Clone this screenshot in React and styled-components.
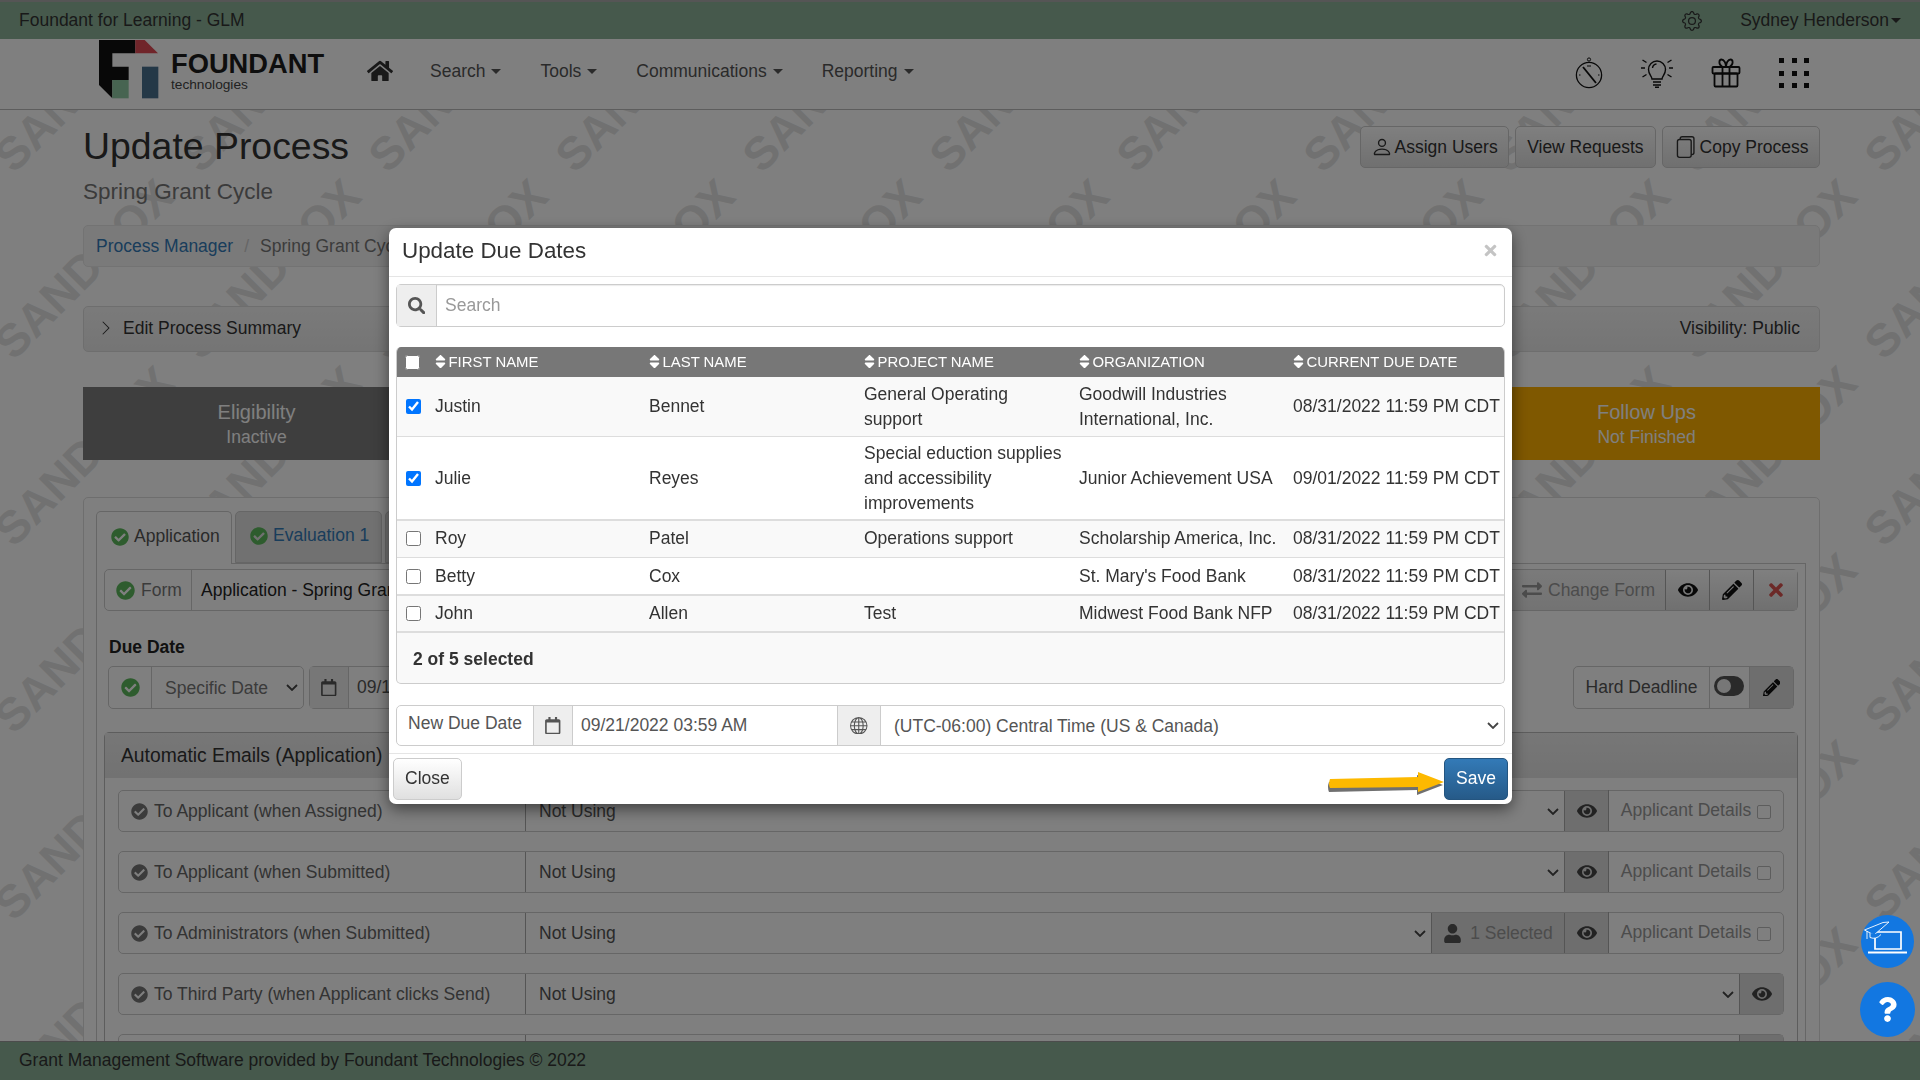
import React from "react";
import styled, { createGlobalStyle } from "styled-components";
import {
  FaHome, FaEye, FaPencilAlt, FaTimes, FaExchangeAlt, FaUser, FaCheckCircle,
  FaSort, FaSearch, FaRegCalendar, FaQuestion,
} from "react-icons/fa";
import { BsGear, BsPerson, BsFiles, BsGlobe, BsChevronRight } from "react-icons/bs";

const GlobalStyle = createGlobalStyle`
  html, body { margin: 0; padding: 0; height: 100%; overflow: hidden; }
  body { font-family: "Liberation Sans", Arial, sans-serif; font-size: 17.5px; color: #333; background: #fff; }
  * { box-sizing: border-box; }
`;

const Page = styled.div`
  height: 1080px;
  display: flex;
  flex-direction: column;
  overflow: hidden;
`;

const TopBar = styled.div`
  height: 39px;
  flex: none;
  background: #8cb298;
  border-top: 2px solid #aaa;
  display: flex;
  align-items: center;
  padding: 0 19px;
  color: #333;
`;

const TopRight = styled.div`
  margin-left: auto;
  display: flex;
  align-items: center;
  color: #333;
  svg { font-size: 20px; margin-right: 38px; }
`;

const SmallCaret = styled.span`
  display: inline-block;
  width: 0;
  height: 0;
  margin-left: ${(p) => p.$gap || 2}px;
  border-top: 5px solid currentColor;
  border-left: 5px solid transparent;
  border-right: 5px solid transparent;
`;

const NavBar = styled.nav`
  height: 71px;
  flex: none;
  background: #fff;
  border-bottom: 1px solid #bbb;
  display: flex;
  align-items: center;
  padding: 0 111px 0 99px;
`;

const Brand = styled.div`
  display: flex;
  align-items: flex-start;
  width: 268px;
  height: 60px;
  margin-top: -8px;
`;

const BrandText = styled.div`
  margin: 10px 0 0 12px;
  color: #1c1c1c;
`;

const BrandName = styled.div`
  font-size: 27.3px;
  font-weight: bold;
  line-height: 27px;
`;

const BrandSub = styled.div`
  font-size: 13.7px;
  line-height: 13px;
  color: #444;
  margin-top: 1px;
`;

const HomeLink = styled.span`
  font-size: 26px;
  line-height: 1;
  color: #333;
  margin-right: 37px;
  display: flex;
  margin-top: -6px;
`;

const NavItem = styled.span`
  display: flex;
  align-items: center;
  color: #555;
  margin-right: 39px;
  margin-top: -6px;
`;

const NavIcons = styled.div`
  margin-left: auto;
  display: flex;
  align-items: center;
  gap: 38px;
  margin-top: -2px;
`;

const Content = styled.main`
  flex: 1;
  min-height: 0;
  position: relative;
  overflow: hidden;
  padding: 16px 100px 0 83px;
`;

const WatermarkLayer = styled.div`
  position: absolute;
  top: -122px;
  left: -10px;
  display: grid;
  grid-template-columns: repeat(11, 187px);
  grid-auto-rows: 187px;
  color: #e2e2e2;
  font-size: 46px;
  font-weight: bold;
`;

const WatermarkWord = styled.span`
  display: flex;
  align-items: center;
  justify-content: center;
  white-space: nowrap;
  transform: rotate(-45deg);
`;

const Layer = styled.div`
  position: relative;
`;

const Heading = styled.div`
  display: flex;
  justify-content: space-between;
  height: 99px;
`;

const Title = styled.h1`
  margin: 0;
  font-size: 37.4px;
  font-weight: normal;
  line-height: 40px;
  color: #333;
`;

const Subtitle = styled.div`
  font-size: 22.5px;
  line-height: 26px;
  color: #777;
  margin-top: 13px;
`;

const HeadButtons = styled.div`
  display: flex;
  gap: 6px;
  height: 42px;
`;

const GradientButton = styled.button`
  font: inherit;
  color: #333;
  padding: 0 ${(p) => p.$pad || 11}px 2px;
  height: 42px;
  display: inline-flex;
  align-items: center;
  gap: ${(p) => p.$gap || 2}px;
  border: 1px solid #ccc;
  border-radius: 5px;
  background: linear-gradient(#fff, #e0e0e0);
  svg { font-size: 22px; }
`;

const HeadButton = styled(GradientButton)`
  padding-bottom: 0;
`;

const Breadcrumb = styled.div`
  height: 42px;
  display: flex;
  align-items: center;
  gap: 11px;
  padding: 0 12px;
  background: #f5f5f5;
  border: 1px solid #e6e6e6;
  border-radius: 5px;
  color: #777;
`;

const LinkText = styled.span`
  color: #337ab7;
`;

const Separator = styled.span`
  color: #ccc;
`;

const SummaryBar = styled.div`
  margin-top: 39px;
  height: 46px;
  display: flex;
  align-items: center;
  justify-content: space-between;
  padding: 0 19px 2px 14px;
  background: linear-gradient(#f5f5f5, #eaeaea);
  border: 1px solid #ddd;
  border-radius: 5px;
`;

const SummaryLabel = styled.span`
  display: flex;
  align-items: center;
  gap: 9px;
  svg { font-size: 16px; }
`;

const StageRow = styled.div`
  margin-top: 35px;
  display: flex;
  justify-content: space-between;
`;

const Stage = styled.div`
  width: 347px;
  height: 73px;
  background: ${(p) => p.$color};
  color: #fff;
  text-align: center;
  padding-top: 12px;
`;

const StageName = styled.div`
  font-size: 20px;
  line-height: 26px;
`;

const StageState = styled.div`
  line-height: 25px;
`;

const MainPanel = styled.section`
  margin-top: 37px;
  height: 700px;
  background: #fff;
  border: 1px solid #ddd;
  border-radius: 5px;
  padding: 13px 13px 0 12px;
`;

const Tabs = styled.div`
  display: flex;
  gap: 3px;
  height: 52px;
  position: relative;
  z-index: 1;
`;

const Tab = styled.div`
  width: ${(p) => p.$width}px;
  height: ${(p) => (p.$active ? 53 : 52)}px;
  display: flex;
  align-items: center;
  gap: 5px;
  padding: 0 0 3px 14px;
  background: ${(p) => (p.$active ? "#fff" : "#e2e2e2")};
  color: ${(p) => (p.$active ? "#555" : "#337ab7")};
  border: 1px solid #ccc;
  border-bottom: ${(p) => (p.$active ? "none" : "1px solid #ccc")};
  border-radius: 5px 5px 0 0;
`;

const CheckMark = styled(FaCheckCircle)`
  font-size: ${(p) => p.$size || 18}px;
  color: ${(p) => p.$color || "#5cb85c"};
  flex: none;
`;

const TabBody = styled.div`
  height: 640px;
  border: 1px solid #ccc;
  padding: 5px 7px 0;
`;

const Group = styled.div`
  display: flex;
  height: ${(p) => p.$height || 42}px;
  border: 1px solid #ccc;
  border-radius: 5px;
  background: #fff;
`;

const Addon = styled.div`
  flex: none;
  width: ${(p) => (p.$width ? `${p.$width}px` : "auto")};
  display: flex;
  align-items: center;
  justify-content: ${(p) => (p.$left ? "flex-start" : "center")};
  gap: 6px;
  padding: ${(p) => (p.$left ? "0 0 0 11px" : "0")};
  color: ${(p) => p.$color || "#777"};
  background: ${(p) => p.$bg || "transparent"};
  border-right: ${(p) => (p.$last ? "none" : "1px solid #ccc")};
  border-left: ${(p) => (p.$divided ? "1px solid #ccc" : "none")};
`;

const FormName = styled.div`
  flex: 1;
  min-width: 0;
  display: flex;
  align-items: center;
  padding-left: 9px;
  color: #222;
  border-right: 1px solid #ccc;
`;

const ChangeForm = styled.div`
  flex: none;
  width: 154px;
  display: flex;
  align-items: center;
  gap: 6px;
  padding-left: 11px;
  color: #999;
  background: linear-gradient(#f5f5f5, #e6e6e6);
  svg { font-size: 20px; }
`;

const IconButton = styled.div`
  flex: none;
  width: 44px;
  display: flex;
  align-items: center;
  justify-content: center;
  font-size: 20px;
  color: ${(p) => p.$color || "#111"};
  background: linear-gradient(#fff, #e0e0e0);
  border-left: 1px solid #aaa;
`;

const DueLabel = styled.div`
  margin-top: 24px;
  padding-left: 5px;
  font-weight: bold;
  color: #222;
  line-height: 25px;
  height: 31px;
`;

const DueRow = styled.div`
  display: flex;
  gap: 5px;
  padding: 0 4px;
`;

const chevron =
  "data:image/svg+xml,%3Csvg xmlns='http://www.w3.org/2000/svg' width='12' height='7'%3E%3Cpath d='M1 1l5 5 5-5' fill='none' stroke='%23444' stroke-width='1.8'/%3E%3C/svg%3E";

const PlainSelect = styled.select`
  font: inherit;
  appearance: none;
  flex: ${(p) => (p.$width ? "none" : "1")};
  width: ${(p) => (p.$width ? `${p.$width}px` : "auto")};
  min-width: 0;
  height: 100%;
  padding: 0 ${(p) => p.$pad || 13}px;
  border: none;
  background: #fff url("${chevron}") right 5px center no-repeat;
  color: ${(p) => p.$color || "#777"};
  border-radius: 0 5px 5px 0;
  outline: none;
`;

const Pushed = styled.div`
  margin-left: auto;
`;

const Toggle = styled.span`
  width: 30px;
  height: 20px;
  border-radius: 10px;
  background: #555;
  display: block;
  margin: -4px 2px 0 0;
  position: relative;
  &::after {
    content: "";
    position: absolute;
    left: 3px;
    top: 3px;
    width: 14px;
    height: 14px;
    border-radius: 50%;
    background: #eee;
  }
`;

const EmailPanel = styled.div`
  margin-top: 23px;
  background: #fff;
  border: 1px solid #bbb;
  border-radius: 5px;
`;

const EmailHead = styled.div`
  height: 45px;
  padding-left: 16px;
  display: flex;
  align-items: center;
  font-size: 19.3px;
  background: linear-gradient(#eee, #e4e4e4);
  color: #333;
`;

const EmailBody = styled.div`
  padding: 12px 13px 0 13px;
  display: flex;
  flex-direction: column;
  gap: 19px;
`;

const EmailLabel = styled.div`
  flex: none;
  width: 407px;
  display: flex;
  align-items: center;
  gap: 6px;
  padding-left: 12px;
  color: #666;
  border-right: 1px solid #aaa;
`;

const ExtraAddon = styled.div`
  flex: none;
  width: ${(p) => p.$width}px;
  display: flex;
  align-items: center;
  justify-content: center;
  gap: 8px;
  color: ${(p) => p.$color || "#444"};
  background: #dcdcdc;
  border-left: 1px solid #aaa;
  svg { font-size: ${(p) => p.$icon || 20}px; }
`;

const DetailsAddon = styled.label`
  flex: none;
  width: 175px;
  display: flex;
  align-items: center;
  justify-content: center;
  gap: 6px;
  color: #999;
  margin-top: -1px;
  border-left: 1px solid #aaa;
`;

const DisabledBox = styled.span`
  width: 14px;
  height: 14px;
  border: 1px solid #bbb;
  border-radius: 2px;
  margin-top: 2px;
`;

const Footer = styled.footer`
  height: 39px;
  flex: none;
  background: #8cb298;
  border-top: 1px solid #999;
  display: flex;
  align-items: center;
  padding: 0 0 1px 19px;
  color: #333;
  position: relative;
  z-index: 2;
`;

const Backdrop = styled.div`
  position: fixed;
  inset: 0;
  background: rgba(0, 0, 0, 0.5);
  z-index: 10;
`;

const Modal = styled.div`
  position: fixed;
  z-index: 11;
  left: 389px;
  top: 228px;
  width: 1123px;
  height: 576px;
  background: #fff;
  border-radius: 7px;
  box-shadow: 0 5px 15px rgba(0, 0, 0, 0.5);
  display: flex;
  flex-direction: column;
`;

const ModalHead = styled.div`
  height: 49px;
  flex: none;
  display: flex;
  align-items: center;
  justify-content: space-between;
  padding: 0 13px;
  border-bottom: 1px solid #e5e5e5;
`;

const ModalTitle = styled.h4`
  margin: 0 0 2px;
  font-size: 22.4px;
  font-weight: normal;
  color: #333;
`;

const CloseX = styled.span`
  font-size: 17px;
  display: flex;
  color: #c4c4c4;
  margin: 0 0 3px;
`;

const ModalBody = styled.div`
  flex: 1;
  padding: 7px;
  display: flex;
  flex-direction: column;
`;

const SearchGroup = styled(Group)`
  flex: none;
  box-shadow: inset 0 1px 1px rgba(0, 0, 0, 0.08);
`;

const TextInput = styled.input`
  font: inherit;
  flex: ${(p) => (p.$width ? "none" : "1")};
  width: ${(p) => (p.$width ? `${p.$width}px` : "auto")};
  min-width: 0;
  border: none;
  outline: none;
  background: transparent;
  color: #555;
  padding: 0 8px;
  &::placeholder { color: #999; }
`;

const TablePanel = styled.div`
  margin-top: 20px;
  height: 337px;
  flex: none;
  background: #f9f9f9;
  border: 1px solid #ccc;
  border-top: none;
  border-radius: 5px;
  overflow: hidden;
`;

const Table = styled.table`
  width: 100%;
  border-collapse: collapse;
  table-layout: fixed;
  background: #fff;
`;

const Th = styled.th`
  height: 30px;
  padding: 0 0 2px 1.5px;
  background: #777;
  color: #fff;
  font-size: 14.9px;
  font-weight: normal;
  text-align: left;
  text-transform: uppercase;
  white-space: nowrap;
  svg { font-size: 17px; vertical-align: -3px; margin-right: 0; }
`;

const CheckTh = styled(Th)`
  padding: 0 0 0 4px;
`;

const Td = styled.td`
  padding: 1px 4px 0 5px;
  line-height: 25px;
  color: #333;
  white-space: ${(p) => (p.$nowrap ? "nowrap" : "normal")};
`;

const Tr = styled.tr`
  height: ${(p) => p.$height}px;
  background: ${(p) => (p.$odd ? "#f9f9f9" : "#fff")};
  border-bottom: ${(p) => (p.$thick ? "2px solid #ddd" : "1px solid #ddd")};
  ${Td} { padding-top: ${(p) => (p.$tight ? 0 : 1)}px; }
`;

const Tick = styled.input`
  display: block;
  width: 15px;
  height: 15px;
  margin: 0 0 0 4px;
`;

const SelectedCount = styled.div`
  padding: 16px 0 0 16px;
  font-weight: bold;
  color: #333;
`;

const DateGroup = styled(Group)`
  margin-top: 21px;
  flex: none;
`;

const DateLabel = styled.div`
  flex: none;
  width: 137px;
  padding-top: 7px;
  text-align: center;
  color: #555;
  border-right: 1px solid #ccc;
`;

const ModalFoot = styled.div`
  flex: none;
  height: 51px;
  border-top: 1px solid #e5e5e5;
  padding: 4px 4px 0;
  display: flex;
  justify-content: space-between;
  position: relative;
`;

const SaveButton = styled(GradientButton)`
  color: #fff;
  border-color: #245580;
  background: linear-gradient(#337ab7, #265a88);
`;

const Arrow = styled.svg`
  position: absolute;
  left: 939px;
  top: 18px;
`;

const FloatStack = styled.div`
  position: fixed;
  z-index: 12;
  right: 5px;
  bottom: 43px;
  display: flex;
  flex-direction: column;
  align-items: center;
  gap: 14px;
`;

const RoundButton = styled.div`
  width: ${(p) => p.$size}px;
  height: ${(p) => p.$size}px;
  border-radius: 50%;
  background: #1277e1;
  color: #fff;
  display: flex;
  align-items: center;
  justify-content: center;
  font-size: 25px;
`;

const AppsGrid = styled.div`
  display: grid;
  grid-template-columns: repeat(3, 5px);
  gap: 7.5px;
  & > span { width: 5px; height: 5px; background: #111; }
`;

const logo = (
  <svg width="60" height="60" viewBox="0 0 180 180">
    <polygon points="0,0 109,0 109,40 40,40 40,80 89,80 89,120 40,120 40,175 0,135" fill="#111" />
    <polygon points="109,0 137,0 177,40 109,40" fill="#e04a55" />
    <rect x="40" y="120" width="49" height="55" fill="#8fc9a3" />
    <rect x="129" y="80" width="49" height="95" fill="#48708f" />
  </svg>
);

const compass = (
  <svg width="28" height="32" viewBox="0 0 28 32" fill="none" stroke="#111">
    <circle cx="14" cy="2.5" r="1.6" strokeWidth="1" />
    <circle cx="14" cy="18" r="12.6" strokeWidth="1.3" />
    <path d="M8 10 L21 26" strokeWidth="1.8" />
    <path d="M13 8v2M15 8v2M4 18h1.5M23 18h1.5" strokeWidth="1" />
  </svg>
);

const bulb = (
  <svg width="32" height="30" viewBox="0 0 32 30" fill="none" stroke="#111" strokeWidth="1.4">
    <path d="M11 21c0-3-3.5-4.5-3.5-9.5a8.5 8.5 0 0 1 17 0c0 5-3.5 6.5-3.5 9.5z" />
    <path d="M12 24h8M12 27h8M14 29.3h4M11.5 10a4.5 4.5 0 0 1 4-4" />
    <path d="M0 10h4M28 10h4M1.5 2l4 2.5M30.5 2l-4 2.5M1.5 19l4-2.5M30.5 19l-4-2.5" />
  </svg>
);

const gift = (
  <svg width="30" height="30" viewBox="0 0 30 30" fill="none" stroke="#111" strokeWidth="1.8" strokeLinejoin="round">
    <rect x="1.5" y="9" width="27" height="6.5" rx="1" />
    <rect x="3.5" y="15.5" width="23" height="13" rx="1" />
    <path d="M11.5 9v19.5M18.5 9v19.5" />
    <path d="M11.5 9C7 6.5 8 1.5 10.5 1.5S15 5 15 9c0-4 2-7.5 4.5-7.5S23 6.5 18.5 9" />
  </svg>
);

const laptopCap = (
  <svg width="53" height="53" viewBox="0 0 53 53" fill="none" stroke="#fff">
    <path d="M14 17h26v17H14z" strokeWidth="1.7" />
    <path d="M7 37.5h39" strokeWidth="2" />
    <path d="M3.5 15L22 7.5l6-0.5-15 13z" strokeWidth="0.9" fill="#1277e1" />
    <path d="M9 18v4.5q6 2.5 11-3M6 16v8" strokeWidth="0.9" fill="#1277e1" />
  </svg>
);

const People = [
  { first: "Justin", last: "Bennet", project: <>General Operating<br />support</>, org: <>Goodwill Industries<br />International, Inc.</>, due: "08/31/2022 11:59 PM CDT", checked: true, height: 59, odd: true },
  { first: "Julie", last: "Reyes", project: <>Special eduction supplies<br />and accessibility<br />improvements</>, org: "Junior Achievement USA", due: "09/01/2022 11:59 PM CDT", checked: true, height: 84, thick: true },
  { first: "Roy", last: "Patel", project: "Operations support", org: "Scholarship America, Inc.", due: "08/31/2022 11:59 PM CDT", height: 37, odd: true, tight: true },
  { first: "Betty", last: "Cox", project: "", org: "St. Mary's Food Bank", due: "08/31/2022 11:59 PM CDT", height: 38, thick: true },
  { first: "John", last: "Allen", project: "Test", org: "Midwest Food Bank NFP", due: "08/31/2022 11:59 PM CDT", height: 37, odd: true, thick: true, tight: true },
];

const Columns = ["First Name", "Last Name", "Project Name", "Organization", "Current Due Date"];

const Emails = [
  { label: "To Applicant (when Assigned)", details: true },
  { label: "To Applicant (when Submitted)", details: true },
  { label: "To Administrators (when Submitted)", details: true, selected: true },
  { label: "To Third Party (when Applicant clicks Send)" },
  { label: "" },
];

function EmailRow({ label, details, selected }) {
  return (
    <Group>
      <EmailLabel>{label && <CheckMark $size={17} $color="#777" />}{label}</EmailLabel>
      <PlainSelect $pad={13} defaultValue="Not Using" $color="#555">
        <option>Not Using</option>
      </PlainSelect>
      {selected && (
        <ExtraAddon $width={133} $color="#999" $icon={19}><FaUser color="#555" />1 Selected</ExtraAddon>
      )}
      <ExtraAddon $width={44}><FaEye /></ExtraAddon>
      {details && <DetailsAddon>Applicant Details<DisabledBox /></DetailsAddon>}
    </Group>
  );
}

export default function App() {
  return (
    <>
      <GlobalStyle />
      <Page>
        <TopBar>
          Foundant for Learning - GLM
          <TopRight><BsGear />Sydney Henderson<SmallCaret /></TopRight>
        </TopBar>
        <NavBar>
          <Brand>
            {logo}
            <BrandText>
              <BrandName>FOUNDANT</BrandName>
              <BrandSub>technologies</BrandSub>
            </BrandText>
          </Brand>
          <HomeLink><FaHome /></HomeLink>
          <NavItem>Search<SmallCaret $gap={6} /></NavItem>
          <NavItem>Tools<SmallCaret $gap={6} /></NavItem>
          <NavItem>Communications<SmallCaret $gap={6} /></NavItem>
          <NavItem>Reporting<SmallCaret $gap={6} /></NavItem>
          <NavIcons>
            {compass}
            {bulb}
            {gift}
            <AppsGrid>{Array.from({ length: 9 }, (_, i) => <span key={i} />)}</AppsGrid>
          </NavIcons>
        </NavBar>
        <Content>
          <WatermarkLayer>
            {Array.from({ length: 66 }, (_, i) => <WatermarkWord key={i}>SANDBOX</WatermarkWord>)}
          </WatermarkLayer>
          <Layer>
            <Heading>
              <div>
                <Title>Update Process</Title>
                <Subtitle>Spring Grant Cycle</Subtitle>
              </div>
              <HeadButtons>
                <HeadButton $pad={10}><BsPerson />Assign Users</HeadButton>
                <HeadButton $pad={11.5}>View Requests</HeadButton>
                <HeadButton $pad={10.5} $gap={4}><BsFiles />Copy Process</HeadButton>
              </HeadButtons>
            </Heading>
            <Breadcrumb>
              <LinkText>Process Manager</LinkText>
              <Separator>/</Separator>
              Spring Grant Cycle
            </Breadcrumb>
            <SummaryBar>
              <SummaryLabel><BsChevronRight />Edit Process Summary</SummaryLabel>
              Visibility: Public
            </SummaryBar>
            <StageRow>
              <Stage $color="#7c7c7c">
                <StageName>Eligibility</StageName>
                <StageState>Inactive</StageState>
              </Stage>
              <Stage $color="#ffb000">
                <StageName>Follow Ups</StageName>
                <StageState>Not Finished</StageState>
              </Stage>
            </StageRow>
            <MainPanel>
              <Tabs>
                <Tab $active $width={136}><CheckMark />Application</Tab>
                <Tab $width={147}><CheckMark />Evaluation 1</Tab>
                <Tab $width={60} />
              </Tabs>
              <TabBody>
                <Group>
                  <Addon $width={87} $left><CheckMark $size={19} />Form</Addon>
                  <FormName>Application - Spring Grant Cycle</FormName>
                  <ChangeForm><FaExchangeAlt />Change Form</ChangeForm>
                  <IconButton><FaEye /></IconButton>
                  <IconButton><FaPencilAlt /></IconButton>
                  <IconButton $color="#d9534f"><FaTimes /></IconButton>
                </Group>
                <DueLabel>Due Date</DueLabel>
                <DueRow>
                  <Group $height={43}>
                    <Addon $width={43}><CheckMark $size={19} /></Addon>
                    <PlainSelect $width={151} defaultValue="Specific Date">
                      <option>Specific Date</option>
                    </PlainSelect>
                  </Group>
                  <Group $height={43}>
                    <Addon $width={39} $bg="#eee" $color="#555"><FaRegCalendar /></Addon>
                    <TextInput $width={200} defaultValue="09/15/2022" />
                  </Group>
                  <Pushed>
                    <Group $height={43}>
                      <Addon $width={136} $color="#555">Hard Deadline</Addon>
                      <Addon $width={40}><Toggle /></Addon>
                      <Addon $width={43} $last $bg="#ddd" $color="#111"><FaPencilAlt /></Addon>
                    </Group>
                  </Pushed>
                </DueRow>
                <EmailPanel>
                  <EmailHead>Automatic Emails (Application)</EmailHead>
                  <EmailBody>
                    {Emails.map((email, i) => <EmailRow key={i} {...email} />)}
                  </EmailBody>
                </EmailPanel>
              </TabBody>
            </MainPanel>
          </Layer>
        </Content>
        <Footer>Grant Management Software provided by Foundant Technologies © 2022</Footer>
      </Page>
      <Backdrop />
      <Modal>
        <ModalHead>
          <ModalTitle>Update Due Dates</ModalTitle>
          <CloseX><FaTimes /></CloseX>
        </ModalHead>
        <ModalBody>
          <SearchGroup $height={43}>
            <Addon $width={40} $bg="#eee" $color="#555"><FaSearch /></Addon>
            <TextInput placeholder="Search" />
          </SearchGroup>
          <TablePanel>
            <Table>
              <colgroup>
                <col style={{ width: 33 }} />
                <col style={{ width: 214 }} />
                <col style={{ width: 215 }} />
                <col style={{ width: 215 }} />
                <col style={{ width: 214 }} />
                <col />
              </colgroup>
              <thead>
                <tr>
                  <CheckTh><Tick type="checkbox" /></CheckTh>
                  {Columns.map((name) => <Th key={name}><FaSort />{name}</Th>)}
                </tr>
              </thead>
              <tbody>
                {People.map((p) => (
                  <Tr key={p.first} $height={p.height} $odd={p.odd} $thick={p.thick} $tight={p.tight}>
                    <Td><Tick type="checkbox" defaultChecked={p.checked} /></Td>
                    <Td>{p.first}</Td>
                    <Td>{p.last}</Td>
                    <Td $nowrap>{p.project}</Td>
                    <Td $nowrap>{p.org}</Td>
                    <Td $nowrap>{p.due}</Td>
                  </Tr>
                ))}
              </tbody>
            </Table>
            <SelectedCount>2 of 5 selected</SelectedCount>
          </TablePanel>
          <DateGroup $height={41}>
            <DateLabel>New Due Date</DateLabel>
            <Addon $width={39} $bg="#eee" $color="#555"><FaRegCalendar /></Addon>
            <TextInput $width={264} defaultValue="09/21/2022 03:59 AM" />
            <Addon $width={44} $divided $bg="#eee" $color="#555"><BsGlobe /></Addon>
            <PlainSelect $pad={13} $color="#555" defaultValue="tz">
              <option value="tz">(UTC-06:00) Central Time (US &amp; Canada)</option>
            </PlainSelect>
          </DateGroup>
        </ModalBody>
        <ModalFoot>
          <GradientButton>Close</GradientButton>
          <Arrow width="120" height="26" viewBox="0 0 120 26">
            <path d="M2 8 L90 6 L90 1 L116 11 L90 21 L90 16 L2 18 Q0 13 2 8Z" fill="#333" transform="translate(-1 2)" opacity="0.7" />
            <path d="M2 7 L90 5 L90 0 L116 10 L90 20 L90 15 L2 16 Q0 12 2 7Z" fill="#fdb900" />
          </Arrow>
          <SaveButton>Save</SaveButton>
        </ModalFoot>
      </Modal>
      <FloatStack>
        <RoundButton $size={53}>{laptopCap}</RoundButton>
        <RoundButton $size={55}><FaQuestion /></RoundButton>
      </FloatStack>
    </>
  );
}
